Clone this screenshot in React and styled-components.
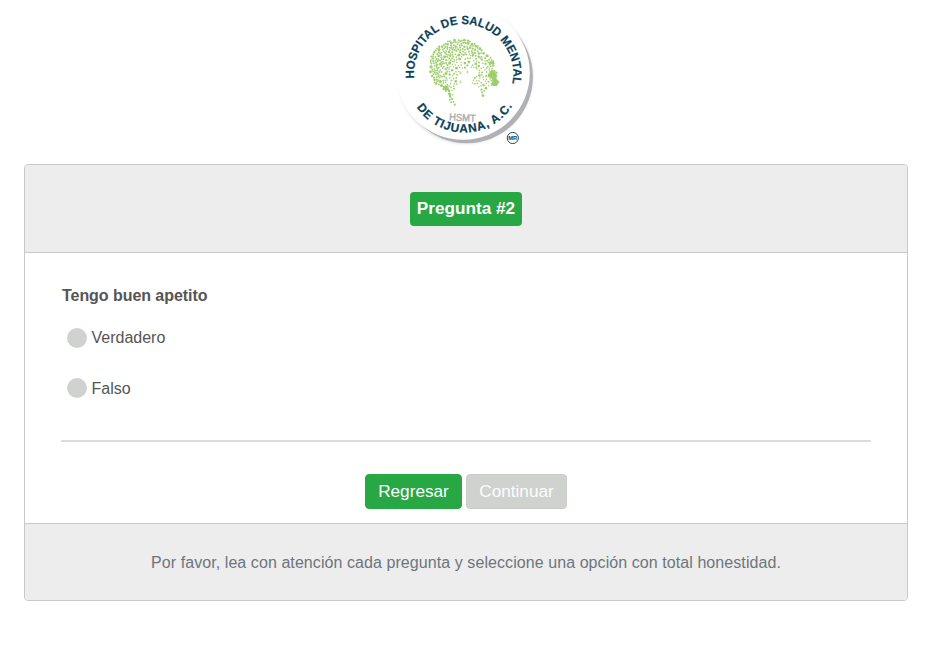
import React from "react";
import styled, { createGlobalStyle, css } from "styled-components";

const Global = createGlobalStyle`
  *, *::before, *::after { box-sizing: border-box; }
  body {
    margin: 0;
    background: #fff;
    color: #555;
    font: 400 16px/24px "Liberation Sans", Arial, sans-serif;
  }
`;

const Page = styled.main`
  padding: 6px 24px 0;
`;
const LogoRow = styled.header`
  display: flex;
  justify-content: center;
  height: 158px;
  padding-left: 4px;
`;
const Emblem = styled.svg`
  display: block;
  width: 144px;
  height: 144px;
`;
const Card = styled.section`
  display: flex;
  flex-direction: column;
  height: 437px;
  border: 1px solid #c8c8c8;
  border-radius: 4px;
  overflow: hidden;
`;
const CardHeader = styled.div`
  display: flex;
  justify-content: center;
  align-items: flex-start;
  height: 88px;
  padding-top: 27px;
  background: #ededed;
  border-bottom: 1px solid #c8c8c8;
`;
const Badge = styled.h1`
  margin: 0;
  width: 112px;
  height: 34px;
  border-radius: 4px;
  background: #28a745;
  color: #fff;
  font-size: 17.2px;
  font-weight: 700;
  line-height: 33px;
  text-align: center;
  white-space: nowrap;
`;
const CardBody = styled.form`
  flex: 1;
  padding: 31px 36px 0;
`;
const Question = styled.h2`
  margin: 0 0 18px 1px;
  font-size: 16px;
  font-weight: 700;
  line-height: 24px;
  letter-spacing: -0.05px;
`;
const Options = styled.div`
  display: flex;
  flex-direction: column;
  gap: 27px;
  padding-left: 6px;
`;
const Option = styled.label`
  display: flex;
  align-items: flex-start;
  gap: 4.5px;
  height: 24px;
`;
const Radio = styled.span`
  width: 20px;
  height: 20px;
  margin-top: ${(p) => p.$top}px;
  border-radius: 50%;
  background: #d0d2d0;
`;
const Divider = styled.hr`
  height: 2px;
  margin: 39px 0 32px;
  border: 0;
  background: #dcdcdc;
`;
const Actions = styled.div`
  display: flex;
  justify-content: center;
  gap: 4px;
`;
const Button = styled.button`
  width: ${(p) => p.$width}px;
  height: 35px;
  padding: 0;
  border: 1px solid #28a745;
  border-radius: 4px;
  background: #28a745;
  color: #fff;
  font: 400 17.2px/33px "Liberation Sans", Arial, sans-serif;
  ${(p) =>
    p.disabled &&
    css`
      border-color: #cbcdcb;
      background: #d0d2d0;
      color: #fcfcfc;
    `}
`;
const CardFooter = styled.footer`
  height: 77px;
  padding-top: 27px;
  background: #ededed;
  border-top: 1px solid #c8c8c8;
  color: #6c757d;
  letter-spacing: 0.073px;
  text-align: center;
`;

const HEAD = [
  [33.5, 60], [35, 51], [41, 42], [50, 36], [60, 33], [71, 34], [80, 38], [87, 44],
  [90, 49], [97, 53], [98, 57], [97, 61], [101, 66], [100, 70], [103, 76],
  [99, 80], [93, 79], [91, 84], [87, 90], [85, 86], [82, 79], [76, 77],
  [79, 70], [84, 66], [80, 63], [72, 62], [66, 62], [61, 68], [62, 77],
  [58, 83], [57, 90], [56, 93], [60, 99], [54, 97], [53, 88], [46, 82],
  [39, 77], [35, 70],
];

const inside = (x, y) => {
  let hit = false;
  for (let i = 0, j = HEAD.length - 1; i < HEAD.length; j = i++) {
    const [xi, yi] = HEAD[i];
    const [xj, yj] = HEAD[j];
    if (yi > y !== yj > y && x < ((xj - xi) * (y - yi)) / (yj - yi) + xi) hit = !hit;
  }
  return hit;
};

// Seeded generator so that the speckle pattern is stable.
let seed = 90211;
const random = () => {
  seed = (Math.imul(seed, 1664525) + 1013904223) >>> 0;
  return seed / 4294967296;
};

const specks = [];
for (let n = 0; n < 14000; n++) {
  const x = 33 + random() * 71;
  const y = 34 + random() * 66;
  const size = random();
  if (!inside(x, y)) continue;
  const core = Math.hypot(x - 73, (y - 74) * 0.9);
  const r = (core > 24 ? 0.9 : 0.75) + size * size * 0.7;
  const gap = core > 29 ? -0.2 : core > 22 ? 0.1 : 0.7;
  if (specks.every(([a, b, c]) => Math.hypot(a - x, b - y) > r + c + gap)) {
    specks.push([x, y, r]);
  }
}

const Logo = () => (
  <Emblem viewBox="0 0 144 144" role="img" aria-label="Hospital de Salud Mental de Tijuana, A.C.">
    <defs>
      <filter id="soft" x="-10%" y="-10%" width="120%" height="120%">
        <feGaussianBlur stdDeviation="1.6" />
      </filter>
      <path id="upper" d="M18.300 72.300A49.600 49.600 0 1 1 115.200 82" />
      <path id="lower" d="M20.600 101.300A57.300 57.300 0 0 0 118.500 96.500" />
    </defs>
    <circle cx="69.500" cy="70.500" r="67.500" fill="#000" opacity=".1" filter="url(#soft)" />
    <circle cx="70.700" cy="71" r="66.200" fill="#b0b1b4" />
    <circle cx="67" cy="67" r="66.800" fill="#fff" />
    <g fill="#9fce6c">
      {specks.map(([x, y, r], i) => (
        <circle key={i} cx={x} cy={y} r={r} />
      ))}
      <path d="M96 64l3 1 2 4-1 3 3 4-2 4-4 0-2-2 2-3-2-3-3-1 0-3zM47 80l5 0 1 4-3 1-3-2zM52 87l3 0 0 3-2 0zM94 55l4 1-1 3-4-2z" />
      <path d="M79 61h3M80.500 59.500v3M70 66h3M71.500 64.500v3M84 69h3M85.500 67.500v3M63 67h3M64.500 65.500v3M63 76h3M64.500 74.500v3" fill="none" stroke="#b8da94" strokeWidth=".8" />
    </g>
    <g fill="#0b4058" stroke="#0b4058" strokeWidth=".2" fontFamily="'Liberation Sans', Arial, sans-serif" fontWeight="700" fontSize="11.900">
      <text>
        <textPath href="#upper" textLength="170" lengthAdjust="spacingAndGlyphs">HOSPITAL DE SALUD MENTAL</textPath>
      </text>
      <text>
        <textPath href="#lower" textLength="113" lengthAdjust="spacing">DE TIJUANA, A.C.</textPath>
      </text>
    </g>
    <text x="53" y="115" transform="rotate(3 66 114)" fill="#a9abae" stroke="#a9abae" strokeWidth=".4" fontFamily="'Liberation Sans', Arial, sans-serif" fontSize="10" textLength="26.500" lengthAdjust="spacingAndGlyphs">HSMT</text>
    <circle cx="116.800" cy="132" r="5.600" fill="#fff" stroke="#1b506a" strokeWidth="1" />
    <text x="116.800" y="134" textAnchor="middle" fill="#0b4058" fontFamily="'Liberation Sans', Arial, sans-serif" fontWeight="700" fontSize="5.800">MR</text>
  </Emblem>
);

const OPTIONS = [
  { label: "Verdadero", top: 2 },
  { label: "Falso", top: 1 },
];

export default function App() {
  return (
    <Page>
      <Global />
      <LogoRow>
        <Logo />
      </LogoRow>
      <Card>
        <CardHeader>
          <Badge>Pregunta #2</Badge>
        </CardHeader>
        <CardBody>
          <Question>Tengo buen apetito</Question>
          <Options>
            {OPTIONS.map(({ label, top }) => (
              <Option key={label}>
                <Radio $top={top} />
                {label}
              </Option>
            ))}
          </Options>
          <Divider />
          <Actions>
            <Button type="button" $width={97}>Regresar</Button>
            <Button type="button" $width={101} disabled>Continuar</Button>
          </Actions>
        </CardBody>
        <CardFooter>
          Por favor, lea con atención cada pregunta y seleccione una opción con total honestidad.
        </CardFooter>
      </Card>
    </Page>
  );
}
